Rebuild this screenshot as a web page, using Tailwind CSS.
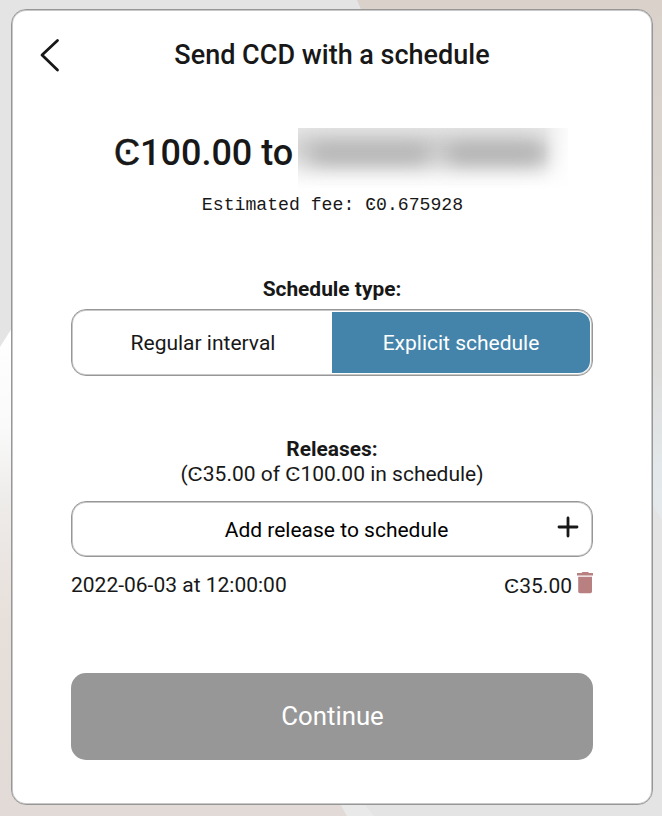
<!DOCTYPE html>
<html lang="en">
<head>
<meta charset="utf-8">
<title>Send CCD with a schedule</title>
<script src="https://cdn.jsdelivr.net/npm/@tailwindcss/browser@4"></script>
</head>
<body class="relative h-[816px] w-[662px] overflow-hidden bg-[#e4e4e4] font-['Roboto',sans-serif] text-[#181818]">
<svg class="absolute inset-0" width="662" height="816" aria-hidden="true">
  <defs>
    <linearGradient id="l" x1="0" y1="330" x2="0" y2="816" gradientUnits="userSpaceOnUse"><stop offset="0" stop-color="#fff"/><stop offset=".2" stop-color="#fafafa"/><stop offset=".35" stop-color="#eeecea"/><stop offset=".6" stop-color="#e7dfda"/><stop offset="1" stop-color="#e2dad6"/></linearGradient>
    <linearGradient id="r" x1="0" y1="0" x2="0" y2="520" gradientUnits="userSpaceOnUse"><stop offset="0" stop-color="#dad1cb"/><stop offset=".4" stop-color="#dad5d0"/><stop offset=".7" stop-color="#dedddc"/><stop offset=".9" stop-color="#e3e8ea"/><stop offset="1" stop-color="#e5e9eb"/></linearGradient>
  </defs>
  <path fill="url(#l)" d="M0 347L12 328L335 795L347 816H0Z"/>
  <path fill="#e9e9e9" d="M341 805H365L374 816H347Z"/>
  <path fill="url(#r)" d="M357 0H662V520L650 500L362 12Z"/>
</svg>
<main class="relative ml-[11px] mt-[9px] flex h-[796px] w-[642px] flex-col rounded-[15px] border border-[#979797] bg-white px-[59px] pt-[25px] shadow-[inset_0_0_0_1px_#c8c8c8]">
  <header class="relative flex h-[38px] items-center justify-center">
    <svg class="absolute -left-[33px] top-[2px]" width="24" height="36" viewBox="0 0 24 36" fill="none" stroke="#181818" stroke-width="2.8" stroke-linecap="round" stroke-linejoin="round"><path d="M19.5 3.5L4 18L19.5 33"/></svg>
    <h1 class="whitespace-nowrap pt-[2px] text-[27px] font-medium leading-[38px]">Send CCD with a schedule</h1>
  </header>
  <div class="mt-[54px] flex h-[61px]">
    <span class="ml-[43px] w-[184px] whitespace-nowrap text-[36px] font-medium leading-[52px]"><span class="[-webkit-text-stroke:0.6px_#181818]">Ͼ</span>100.00 to</span>
    <span class="relative mt-px block h-[61px] w-[270px] overflow-hidden bg-linear-to-b from-[#eeeeee] via-[#f6f6f6] to-[#ffffff]">
      <span class="absolute -left-[10px] top-[6px] h-[30px] w-[256px] bg-[#c8c8c8] blur-[12px]"></span>
      <span class="absolute left-[14px] top-[19px] h-[14px] w-[116px] bg-[#a6a6a6] blur-[10px]"></span>
      <span class="absolute left-[150px] top-[19px] h-[14px] w-[98px] bg-[#a2a2a2] blur-[10px]"></span>
      <span class="absolute inset-y-0 right-0 w-[24px] bg-linear-to-r from-transparent to-white/80"></span>
    </span>
  </div>
  <p class="mt-[5px] pl-px text-center font-['Liberation_Mono',monospace] text-[18.15px] leading-[24px]">Estimated fee: Ͼ0.675928</p>
  <h2 class="mt-[60px] text-center text-[20.9px] font-bold leading-[25px]">Schedule type:</h2>
  <div class="mt-[7px] flex h-[67px] rounded-[15px] border border-[#979797] p-[2px] text-[21px] shadow-[inset_0_0_0_1px_#c8c8c8]">
    <button class="w-[258px] pt-[3px]">Regular interval</button>
    <button class="flex-1 rounded-r-[12px] bg-[#4484ab] pt-[3px] text-white">Explicit schedule</button>
  </div>
  <h2 class="mt-[61px] text-center text-[20.9px] font-bold leading-[25px]">Releases:</h2>
  <p class="text-center text-[21px] leading-[25px]">(Ͼ35.00 of Ͼ100.00 in schedule)</p>
  <button class="relative mt-[14px] h-[56px] rounded-[15px] border border-[#979797] pl-[9px] pt-[3px] text-[21px] text-black shadow-[inset_0_0_0_1px_#c8c8c8]">Add release to schedule
    <svg class="absolute right-[13.5px] top-[14px]" width="22" height="22" viewBox="0 0 22 22" stroke="#181818" stroke-width="2.8" stroke-linecap="round"><path d="M11 2V20M2 11H20"/></svg>
  </button>
  <div class="mt-[15px] flex h-[26px] items-center text-[21px] leading-[26px]">
    <span>2022-06-03 at 12:00:00</span>
    <span class="ml-auto mr-[5px] pt-px">Ͼ35.00</span>
    <svg class="-mr-px -mt-[4px]" width="17" height="22" viewBox="0 0 17 22" fill="#b88080"><path d="M0 1H4.5L5.5 0H11L12 1H16V3.5H0ZM1.2 4.8H15V19.5Q15 21.2 13.2 21.2H3Q1.2 21.2 1.2 19.5Z"/></svg>
  </div>
  <button class="mt-[75px] h-[87px] rounded-[15px] bg-[#979797] pb-px pl-px text-[25.8px] text-white">Continue</button>
</main>
</body>
</html>
